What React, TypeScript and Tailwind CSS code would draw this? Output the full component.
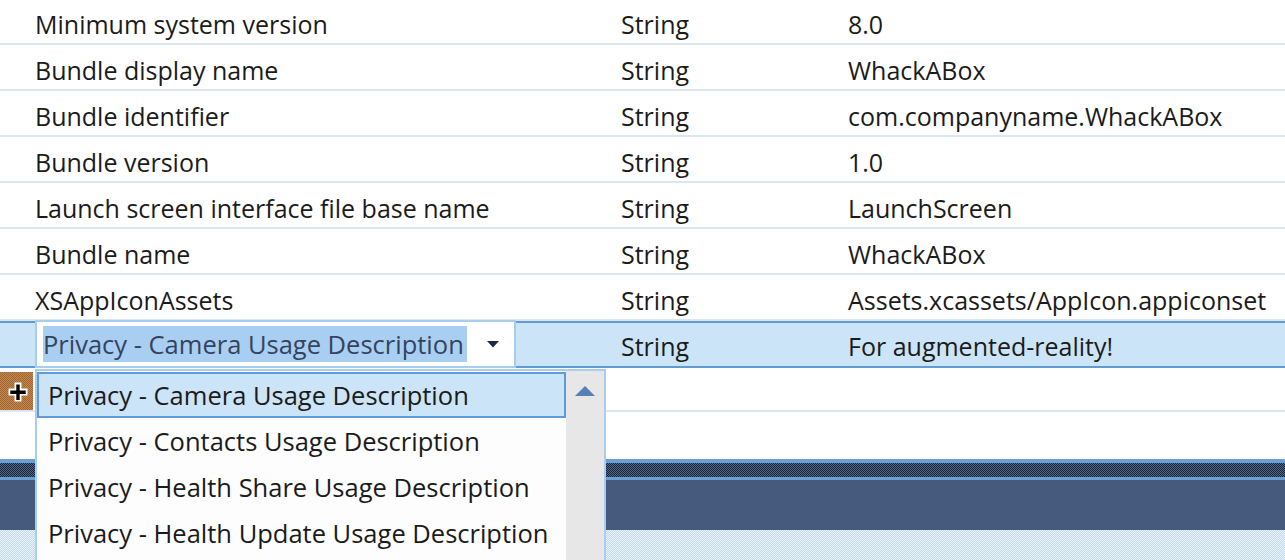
const rows = [
  ['Minimum system version', 'String', '8.0'],
  ['Bundle display name', 'String', 'WhackABox'],
  ['Bundle identifier', 'String', 'com.companyname.WhackABox'],
  ['Bundle version', 'String', '1.0'],
  ['Launch screen interface file base name', 'String', 'LaunchScreen'],
  ['Bundle name', 'String', 'WhackABox'],
  ['XSAppIconAssets', 'String', 'Assets.xcassets/AppIcon.appiconset'],
]

const options = [
  'Privacy - Camera Usage Description',
  'Privacy - Contacts Usage Description',
  'Privacy - Health Share Usage Description',
  'Privacy - Health Update Usage Description',
]

const App = () => {
  return (
    <div className="relative h-[560px] w-[1285px] overflow-hidden bg-white font-['Open_Sans',sans-serif] text-[25px] leading-none text-[#1b1b1b]">
      <div className="-mt-px flex flex-col">
        {rows.map((row, index) => (
          <div
            key={index}
            className="grid h-[46px] grid-cols-[621px_227px_1fr] items-center border-b-2 border-[#dce6ee] pt-[6px]"
          >
            <div className="pl-[35px] whitespace-nowrap">{row[0]}</div>
            <div>{row[1]}</div>
            <div className="whitespace-nowrap">{row[2]}</div>
          </div>
        ))}

        {/* ligne sélectionnée */}
        <div className="grid h-[47px] grid-cols-[621px_227px_1fr] items-center border-y-2 border-[#5f9bd6] bg-[#cce4f7] pt-[4px]">
          <div />
          <div>String</div>
          <div>For augmented-reality!</div>
        </div>

        {/* ligne d'ajout */}
        <div className="flex h-[44px] items-start border-b-2 border-[#dce6ee]">
          <div className="mt-[4px] flex h-[38px] w-[33px] items-center justify-center bg-[conic-gradient(#d9832c_25%,#8a6a55_0_50%,#d9832c_0_75%,#8a6a55_0)] bg-size-[2px_2px]">
            <svg width="20" height="20" viewBox="0 0 20 20" className="ml-[3px] mt-[1px]">
              <path d="M6.5 0.5h7v6h6v7h-6v6h-7v-6h-6v-7h6z" fill="#fff" />
              <path d="M8.3 2.5h3.4v6h6v3.4h-6v6H8.3v-6h-6V8.5h6z" fill="#000" />
            </svg>
          </div>
        </div>

        <div className="h-[47px]" />

        {/* panneau du bas */}
        <div className="h-[4px] bg-[#6a9fd4]" />
        <div className="h-[14px] bg-[conic-gradient(#1c2538_25%,#52668a_0_50%,#1c2538_0_75%,#52668a_0)] bg-size-[2px_2px]" />
        <div className="h-[3px] bg-[#6a9fd4]" />
        <div className="h-[50px] bg-[#465a7e]" />
        <div className="h-[40px] bg-[conic-gradient(#c4d9ee_25%,#e9f1f9_0_50%,#c4d9ee_0_75%,#e9f1f9_0)] bg-size-[2px_2px]" />
      </div>

      {/* éditeur de clé */}
      <div className="absolute left-[35px] top-[320px] flex h-[48px] w-[481px] items-center border-2 border-[#a9cdee] bg-white pl-[6px] pr-[15px] text-[25.5px]">
        <span className="flex h-[36px] items-center bg-[#a8cff2] pr-[3px] pt-[2px] text-[#34445f] whitespace-nowrap">
          Privacy - Camera Usage Description
        </span>
        <svg width="12" height="7" viewBox="0 0 12 7" className="ml-auto">
          <path d="M0 0h12L6 6.5z" fill="#1e2a45" />
        </svg>
      </div>

      {/* liste déroulante */}
      <div className="absolute left-[35px] top-[369px] flex h-[200px] w-[571px] border-x-2 border-t-2 border-[#a9cdee] bg-[#fdfdfd] text-[25.5px]">
        <div className="flex flex-1 flex-col pt-px">
          {options.map((option, index) => (
            <div
              key={index}
              className={
                index === 0
                  ? 'flex h-[46px] items-center border-2 border-[#5f9bd6] bg-[#cce4f7] pl-[9px] pt-[2px] whitespace-nowrap'
                  : 'flex h-[46px] items-center pl-[11px] pt-[2px] whitespace-nowrap'
              }
            >
              {option}
            </div>
          ))}
        </div>
        <div className="flex w-[38px] justify-center bg-[#e7e7e7] pt-[15px]">
          <svg width="20" height="10" viewBox="0 0 20 10">
            <path d="M10 0L20 10H0z" fill="#5681b4" />
          </svg>
        </div>
      </div>
    </div>
  )
}

export default App
